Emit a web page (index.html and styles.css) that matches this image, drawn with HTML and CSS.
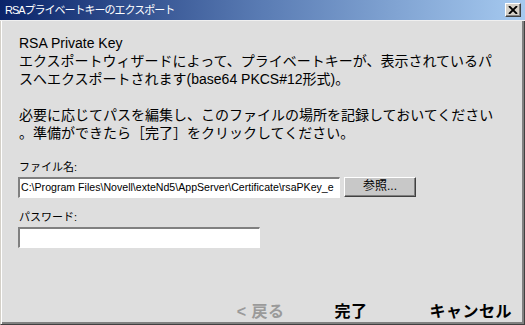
FILE: index.html
```html
<!DOCTYPE html>
<html lang="ja">
<head>
    <meta charset="UTF-8">
    <title>RSAプライベートキーのエクスポート</title>
    <link rel="stylesheet" href="styles.css">
</head>
<body>
    <div class="dialog">
        <div class="titlebar">
            <span class="title">RSAプライベートキーのエクスポート</span>
            <div class="close-button">
                <svg width="10" height="8" viewBox="0 0 10 8">
                    <path d="M1 0 L9 8 M9 0 L1 8" stroke="#000" stroke-width="1.8"/>
                </svg>
            </div>
        </div>

        <div class="content">
            <p class="intro">
                RSA Private Key<br>
                エクスポートウィザードによって、プライベートキーが、表示されているパ<br>
                スへエクスポートされます(base64 PKCS#12形式)。
            </p>
            <p class="intro">
                必要に応じてパスを編集し、このファイルの場所を記録しておいてください<br>
                。準備ができたら［完了］をクリックしてください。
            </p>

            <div class="field">
                <div class="label">ファイル名:</div>
                <div class="field-row">
                    <div class="input path-input">C:\Program Files\Novell\exteNd5\AppServer\Certificate\rsaPKey_e</div>
                    <div class="browse-button">参照...</div>
                </div>
            </div>

            <div class="field">
                <div class="label">パスワード:</div>
                <div class="input password-input"></div>
            </div>
        </div>

        <div class="footer">
            <span class="nav-button disabled">&lt; 戻る</span>
            <span class="nav-button finish">完了</span>
            <span class="nav-button cancel">キャンセル</span>
        </div>
    </div>
</body>
</html>
```

FILE: styles.css
```css
body {
    margin: 0;
    font-family: "Liberation Sans", "Noto Sans CJK JP", sans-serif;
    background: #dddddd;
    overflow: hidden;
}

/* Janela */
.dialog {
    width: 525px;
    height: 325px;
    box-sizing: border-box;
    display: flex;
    flex-direction: column;
    background: #dedede;
    border-left: 1px solid #d4d0c8;
    border-right: 1px solid #404040;
    border-bottom: 1px solid #404040;
    box-shadow: inset 1px 0 #fff, inset -2px -2px #808080;
}

.titlebar {
    height: 21px;
    flex-shrink: 0;
    margin-left: -1px;
    margin-right: -1px;
    background: linear-gradient(to right, #0a246a, #5a7cb4 50%, #a6caf0);
    display: flex;
    align-items: center;
    justify-content: space-between;
    padding: 0 4px 0 5px;
    box-sizing: border-box;
    border-bottom: 1px solid #f0f0f0;
}

.title {
    color: #fff;
    font-size: 11px;
    line-height: 14px;
    letter-spacing: -1px;
}

.close-button {
    width: 16px;
    height: 14px;
    flex-shrink: 0;
    box-sizing: border-box;
    background: #d4d0c8;
    border-top: 1px solid #fff;
    border-left: 1px solid #fff;
    border-right: 1px solid #404040;
    border-bottom: 1px solid #404040;
    box-shadow: inset -1px -1px #808080;
    display: flex;
    align-items: center;
    justify-content: center;
}

/* Conteúdo */
.content {
    padding: 13px 18px 0 17px;
}

.intro {
    margin: 0 0 18px 1px;
    font-size: 14px;
    line-height: 18px;
    color: #000;
}

.field {
    margin-top: 12px;
}

.label {
    font-size: 11px;
    line-height: 15px;
    margin: 0 0 2px 1px;
}

.field-row {
    display: flex;
    align-items: flex-start;
    gap: 4px;
}

.input {
    height: 21px;
    box-sizing: border-box;
    background: #fff;
    border-top: 2px solid #808080;
    border-left: 2px solid #808080;
    border-right: 1px solid #fff;
    border-bottom: 1px solid #fff;
    font-size: 10.6px;
    line-height: 17px;
    padding-left: 1px;
    white-space: nowrap;
    overflow: hidden;
}

.path-input {
    width: 322px;
}

.password-input {
    width: 242px;
}

.browse-button {
    width: 72px;
    height: 20px;
    box-sizing: border-box;
    background: #c8c8c8;
    border-top: 1px solid #fff;
    border-left: 1px solid #fff;
    border-right: 1px solid #404040;
    border-bottom: 1px solid #404040;
    box-shadow: inset -1px -1px #808080;
    font-size: 12px;
    line-height: 17px;
    text-align: center;
}

/* Botões inferiores */
.footer {
    margin-top: auto;
    display: flex;
    justify-content: flex-end;
    padding: 0 12px 2px 0;
}

.nav-button {
    font-size: 16px;
    font-weight: bold;
    line-height: 20px;
    letter-spacing: 0.5px;
    color: #000;
}

.nav-button.disabled {
    color: #9a9a9a;
}

.nav-button.finish {
    margin-left: 50px;
}

.nav-button.cancel {
    margin-left: 62px;
}
```
